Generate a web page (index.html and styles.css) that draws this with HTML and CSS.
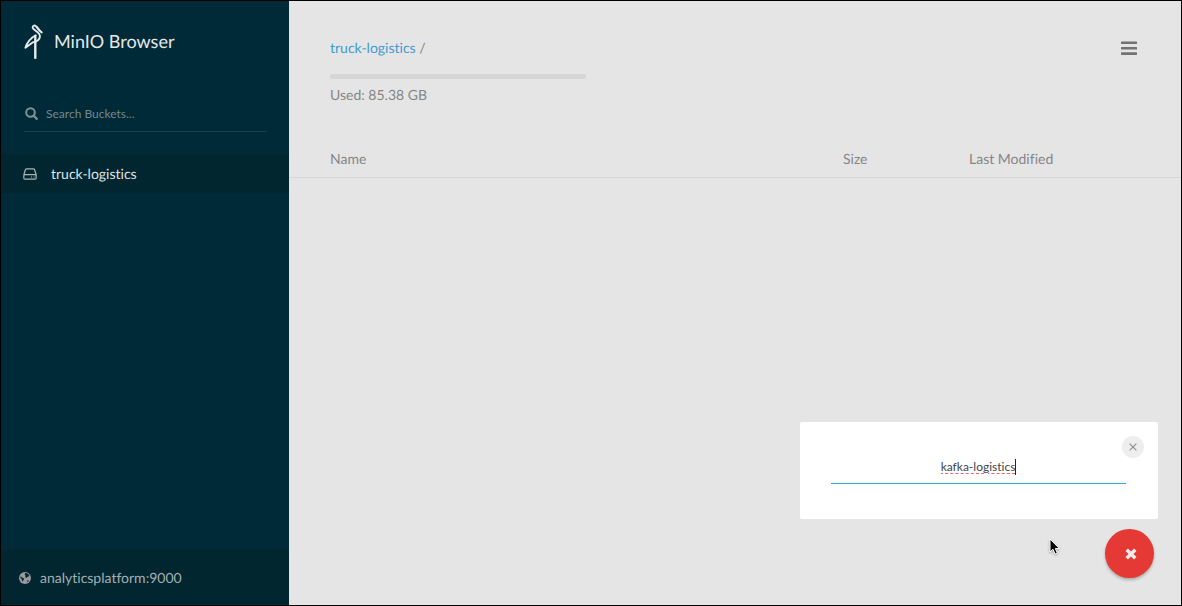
FILE: index.html
```html
<!DOCTYPE html>
<html lang="en">
<head>
<meta charset="utf-8">
<title>MinIO Browser</title>
<link rel="stylesheet" href="styles.css">
</head>
<body>
<div class="app">
  <aside class="sidebar">
    <header class="brand">
      <svg class="brand-logo" viewBox="0 0 20 38" width="20" height="38" fill="none" stroke="#e8ebec" stroke-linejoin="round" aria-hidden="true">
        <path d="M17.6 10.4C15.2 9 13.6 6.4 12.3 4.6C11 2.700 8.600 3.400 8.600 5.600C8.600 8 16.300 9.800 15.900 14.600C15.600 18.400 12.500 19.700 8.600 20.400L1.400 25.800C3 20.600 6.200 16.400 11.600 13.300" stroke-width="1.900" stroke-linecap="round"/>
        <path d="M11.300 13v23.800" stroke-width="2.400"/>
        <path d="M12.600 4.400L18 10.700" stroke-width="1.400"/>
      </svg>
      <h1 class="brand-name">MinIO Browser</h1>
    </header>
    <label class="search">
      <svg class="search-icon" viewBox="0 0 14 14" width="14" height="14" fill="none" stroke="#7f9299" aria-hidden="true">
        <circle cx="6.500" cy="5.500" r="4.300" stroke-width="2"/>
        <path d="M9.700 8.700L12.700 11.800" stroke-width="2.300" stroke-linecap="round"/>
      </svg>
      <input class="search-input" type="text" placeholder="Search Buckets..." aria-label="Search Buckets">
    </label>
    <nav class="buckets">
      <a class="bucket" href="#">
        <svg viewBox="0 0 14 12" width="14" height="12" fill="none" stroke="#a9b3b7" stroke-width="1.200" stroke-linejoin="round" aria-hidden="true">
          <path d="M.8 6.700L2.500 1.500Q2.800.8 3.600.8H10.400Q11.200.8 11.500 1.500L13.200 6.700V10Q13.200 11.200 12 11.200H2Q.8 11.200.8 10V8Q.8 6.700 2 6.700H12Q13.200 6.700 13.200 8M8 9H9M10.500 9H11.500"/>
        </svg>
        <span>truck-logistics</span>
      </a>
    </nav>
    <footer class="host">
      <svg viewBox="0 0 12 12" width="12" height="12" aria-hidden="true">
        <circle cx="6" cy="6" r="6" fill="#969b9d"/>
        <path d="M6.200.9L8.600 1.400L10.600 3.400L9.400 3.900L9.600 5.200L8.200 4.800L7.500 5.900L6.200 5.200L6.600 3.800L5.600 2.600ZM1.400 4.200L2.800 5.200L4.900 6.600L5.100 7.500L4.200 8.300L4 9.700L3 8.700L2.800 7.200L1.400 5.800ZM8.200 8.600L10 8.400L9 9.700L8 10Z" fill="#09252f"/>
      </svg>
      <a class="host-name" href="#">analyticsplatform:9000</a>
    </footer>
  </aside>

  <main class="content">
    <header class="topbar">
      <div class="location">
        <div class="path"><a class="path-link" href="#">truck-logistics</a> /</div>
        <div class="usage-bar"></div>
        <div class="usage-text">Used: 85.38 GB</div>
      </div>
      <button class="menu" type="button" aria-label="Menu">
        <svg viewBox="0 0 18 14" width="18" height="14" fill="#737373" aria-hidden="true">
          <rect x="1" y=".5" width="16" height="2.600" rx=".6"/>
          <rect x="1" y="5.900" width="16" height="2.600" rx=".6"/>
          <rect x="1" y="11.300" width="16" height="2.600" rx=".6"/>
        </svg>
      </button>
    </header>
    <table class="objects">
      <thead>
        <tr><th class="col-name">Name</th><th class="col-size">Size</th><th class="col-date">Last Modified</th></tr>
      </thead>
    </table>
  </main>

  <form class="dialog" role="dialog" aria-label="New bucket">
    <button class="dialog-close" type="button" aria-label="Close">
      <svg viewBox="0 0 8 8" width="8" height="8" stroke="#929292" stroke-width="1.300" aria-hidden="true"><path d="M.6.6L7.400 7.400M7.400.6L.6 7.400"/></svg>
    </button>
    <label class="field">
      <input class="field-input" type="text" value="kafka-logistics" aria-label="Bucket Name" spellcheck="false">
      <span class="caret"></span>
    </label>
  </form>
  <button class="fab" type="button" aria-label="Cancel">
    <svg viewBox="0 0 12 12" width="12" height="12" stroke="#ececec" stroke-width="3.400" aria-hidden="true"><path d="M1.700 1.700L10.300 10.300M10.300 1.700L1.700 10.300"/></svg>
  </button>
  <svg class="pointer" viewBox="0 0 12 18" width="12" height="18" aria-hidden="true">
    <path d="M1 1V14L4 11.300L6.100 16L8.400 15L6.300 10.600H10.400Z" fill="#000" stroke="#fff" stroke-width="1"/>
  </svg>
</div>
</body>
</html>
```
FILE: styles.css
```css
* { box-sizing: border-box; }

body {
  margin: 0;
  font-family: Lato, "Liberation Sans", sans-serif;
  font-size: 14px;
  line-height: 20px;
  font-variant-ligatures: none;
  text-rendering: geometricPrecision;
  color: #858585;
}

a { color: inherit; text-decoration: none; }
button { padding: 0; border: 0; background: none; }
svg { display: block; flex: none; }

.app {
  position: relative;
  display: flex;
  min-height: 100vh;
  border: 1px solid #000;
  background: #e5e5e5;
}

.sidebar {
  display: flex;
  flex-direction: column;
  flex: none;
  width: 288px;
  background: #002a37;
}

.brand {
  display: flex;
  align-items: center;
  gap: 10px;
  padding: 21px 23px 0;
}
.brand-name {
  margin: 0;
  font-size: 18px;
  font-weight: 400;
  line-height: 24px;
  color: #e5e8e9;
}

.search {
  display: flex;
  align-items: center;
  gap: 8px;
  height: 36px;
  margin: 36px 22px 0 23px;
  border-bottom: 1px solid #193f4b;
}
.search-input {
  flex: 1;
  min-width: 0;
  padding: 0;
  border: 0;
  outline: 0;
  background: none;
  font: inherit;
  font-size: 12px;
  color: #7f959b;
}
.search-input::placeholder { color: #74888f; opacity: 1; }

.buckets { padding-top: 22px; }
.bucket {
  display: flex;
  align-items: center;
  gap: 14px;
  height: 39px;
  padding: 0 22px;
  background: #022630;
  color: #dfe3e4;
}

.host {
  display: flex;
  align-items: center;
  gap: 9px;
  height: 55px;
  margin-top: auto;
  padding: 0 18px;
  background: #022630;
  color: #a3afb3;
}

.content { flex: 1; min-width: 0; }

.topbar {
  display: flex;
  justify-content: space-between;
  padding: 37px 43px 0 41px;
}
.location { width: 256px; }
.path-link { color: #419bd2; }
.usage-bar {
  height: 5px;
  margin: 16px 0 6px;
  border-radius: 2px;
  background: #d6d6d6;
}
.menu { align-self: flex-start; padding-top: 3px; }

.objects {
  width: 100%;
  margin-top: 35px;
  border-collapse: collapse;
  table-layout: fixed;
}
.objects th {
  padding: 9px 0 8px;
  border-bottom: 1px solid #d8d8d8;
  font-weight: 400;
  text-align: left;
}
.objects .col-name { padding-left: 41px; }
.col-size { width: 126px; }
.col-date { width: 212px; }

.dialog {
  position: absolute;
  right: 23px;
  bottom: 86px;
  width: 358px;
  padding: 14px 32px 35px 31px;
  border-radius: 2px;
  background: #fff;
}
.dialog-close {
  position: absolute;
  top: 14px;
  right: 14px;
  display: grid;
  place-items: center;
  width: 22px;
  height: 22px;
  border-radius: 50%;
  background: #eee;
}
.field {
  display: flex;
  align-items: center;
  justify-content: center;
  height: 48px;
  padding-top: 14px;
  border-bottom: 1px solid #2fa8dc;
}
.field-input {
  field-sizing: content;
  padding: 0;
  border: 0;
  outline: 0;
  background: none;
  font: inherit;
  font-size: 12px;
  color: #3f464a;
  text-decoration: underline dashed #f4645a 1px;
  text-underline-offset: 2px;
}
.caret {
  width: 1px;
  height: 16px;
  background: #20272b;
}

.fab {
  position: absolute;
  right: 27px;
  bottom: 27px;
  display: grid;
  place-items: center;
  width: 49px;
  height: 49px;
  padding-left: 2px;
  border-radius: 50%;
  background: #e53935;
  box-shadow: 0 2px 3px rgba(0, 0, 0, .25);
}

.pointer {
  position: absolute;
  right: 120px;
  bottom: 49px;
  filter: drop-shadow(0 1px 1px rgba(0, 0, 0, .3));
}
```
